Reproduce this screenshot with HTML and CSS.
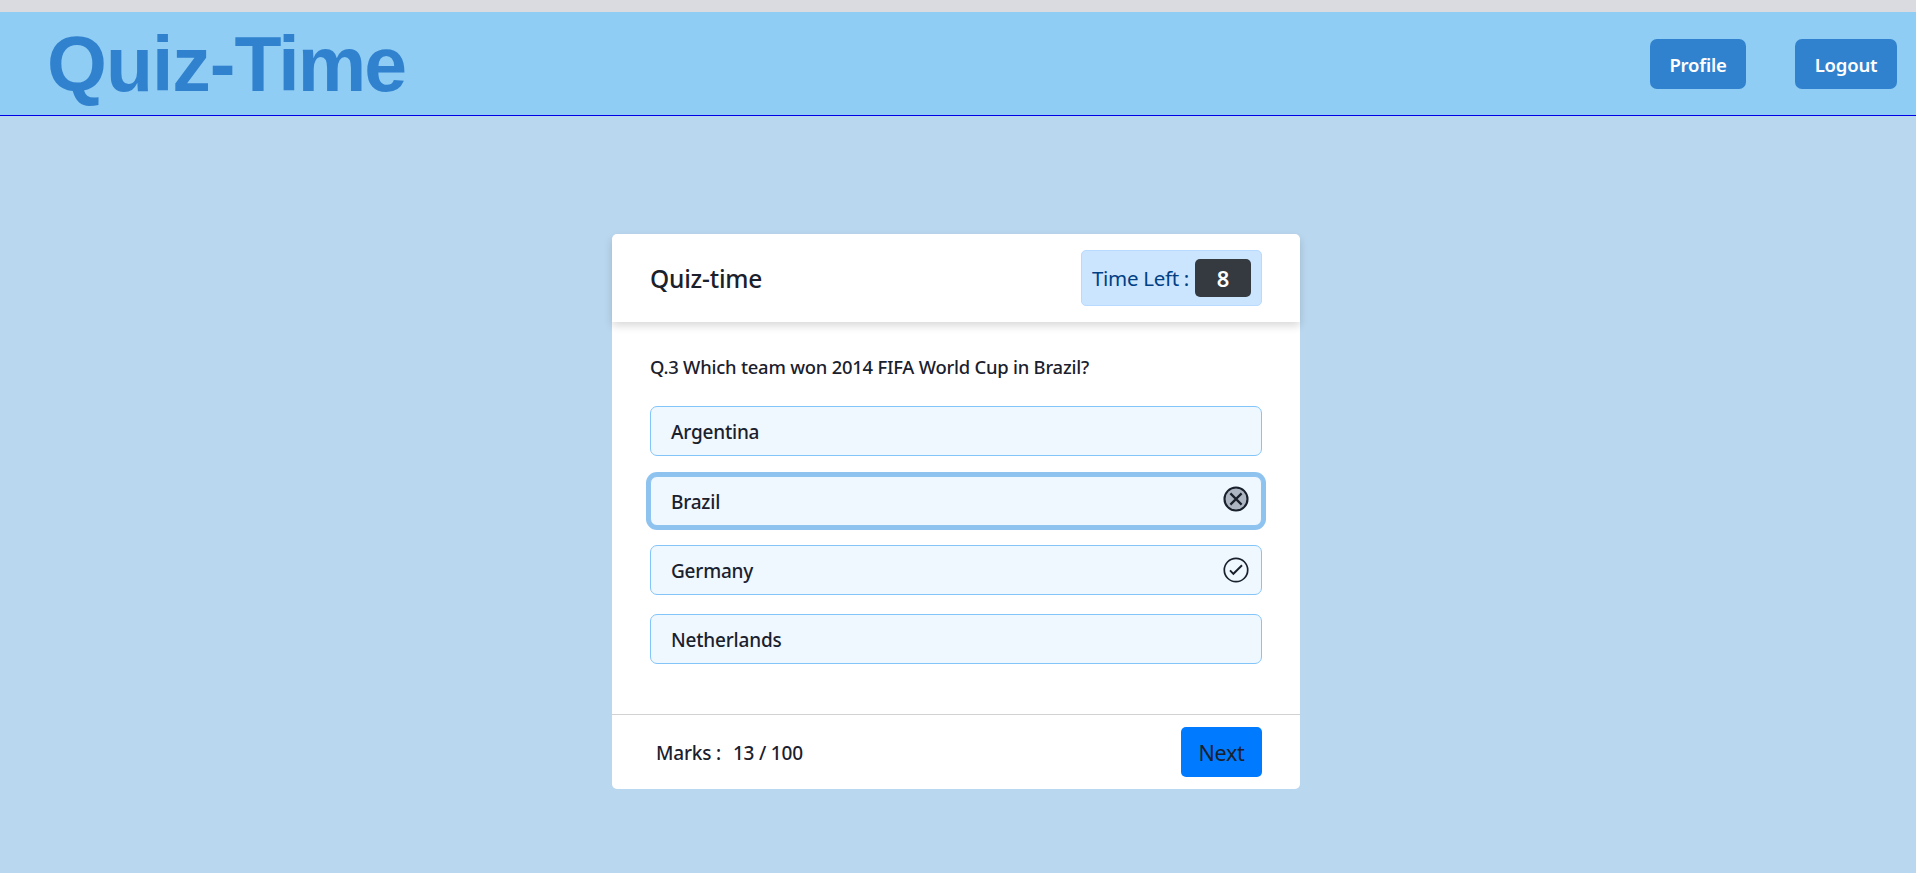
FILE: index.html
```html
<!DOCTYPE html>
<html lang="en">
<head>
<meta charset="utf-8">
<title>Quiz-Time</title>
<link rel="stylesheet" href="styles.css">
</head>
<body>
<header class="navbar">
  <h1 class="brand">Quiz-<span class="brand-tail">Time</span></h1>
  <nav class="nav-actions">
    <button class="nav-btn profile"><span>Profile</span></button>
    <button class="nav-btn logout"><span>Logout</span></button>
  </nav>
</header>
<main class="page">
  <section class="card">
    <div class="card-head">
      <h2 class="card-title"><span>Quiz-time</span></h2>
      <div class="timer"><span class="timer-label">Time Left :</span><span class="timer-value">8</span></div>
    </div>
    <div class="card-body">
      <p class="question"><span>Q.3 Which team won 2014 FIFA World Cup in Brazil?</span></p>
      <div class="options">
        <button class="option"><span>Argentina</span></button>
        <button class="option selected"><span>Brazil</span>
          <svg class="icon icon-wrong" viewBox="0 0 26 26"><circle cx="13" cy="13" r="11.5" fill="#acb5c1" stroke="#1a202c" stroke-width="2.1"/><path d="M7.4 7.4 18.6 18.6M18.6 7.4 7.4 18.6" fill="none" stroke="#1a202c" stroke-width="2.2"/></svg>
        </button>
        <button class="option"><span>Germany</span>
          <svg class="icon icon-right" viewBox="0 0 26 26"><circle cx="13" cy="13" r="11.7" fill="none" stroke="#1a202c" stroke-width="1.7"/><path d="M7 13.3 10.4 16.8 19 8.3" fill="none" stroke="#1a202c" stroke-width="1.9"/></svg>
        </button>
        <button class="option"><span>Netherlands</span></button>
      </div>
    </div>
    <footer class="card-foot">
      <div class="marks"><span>Marks :</span><span>13 / 100</span></div>
      <button class="next"><span>Next</span></button>
    </footer>
  </section>
</main>
</body>
</html>
```
FILE: styles.css
```css
* { box-sizing: border-box; }
body {
  margin: 0;
  height: 873px;
  overflow: hidden;
  background: #b9d7ef;
  color: #1a202c;
  font-family: "Noto Sans", "Open Sans", sans-serif;
  font-size: 19px;
  font-weight: 500;
  letter-spacing: -.2px;
}
h1, h2, p { margin: 0; }
button { font: inherit; letter-spacing: inherit; color: inherit; border: 0; padding: 0; white-space: nowrap; }
.navbar {
  height: 116px;
  padding: 0 19px 0 47px;
  display: flex;
  justify-content: space-between;
  border-top: 12px solid #d9dbe0;
  border-bottom: 1px solid #0000e6;
  background: #90cdf4;
}
.brand {
  padding-top: 8px;
  font: bold 77px/88px "Liberation Sans", Arial, sans-serif;
  letter-spacing: -1px;
  color: #3182ce;
}
.brand-tail { letter-spacing: -1.9px; }
.nav-actions { display: flex; gap: 49px; padding-top: 27px; }
.nav-btn {
  height: 50px;
  border-radius: 7px;
  background: #3182ce;
  color: #fff;
  font-size: 18.5px;
  font-weight: 600;
}
.profile { width: 96px; }
.logout { width: 102px; }
.page { display: flex; justify-content: center; padding: 118px 4px 0 0; }
.card { width: 688px; height: 555px; border-radius: 5px; background: #fff; display: flex; flex-direction: column; }
.card-head {
  height: 88px;
  padding: 0 38px;
  display: flex;
  align-items: center;
  justify-content: space-between;
  border-radius: 5px 5px 0 0;
  box-shadow: 0 4px 8px rgba(0, 0, 0, .15);
}
.card-title { font-size: 24.5px; font-weight: 500; }
.timer {
  width: 181px;
  height: 56px;
  padding: 0 10px;
  display: flex;
  align-items: center;
  justify-content: space-between;
  border: 1px solid #b8daff;
  border-radius: 5px;
  background: #cce5ff;
  color: #004085;
  font-size: 20.5px;
  font-weight: 400;
  letter-spacing: -.3px;
  white-space: nowrap;
}
.timer-value {
  flex: none;
  width: 56px;
  height: 38px;
  border-radius: 5px;
  background: #343a40;
  color: #fff;
  font-size: 22px;
  font-weight: 600;
  line-height: 39px;
  text-align: center;
}
.card-body { height: 392px; padding: 31px 38px 0; }
.question { height: 53px; line-height: 28px; font-size: 18.4px; letter-spacing: -.22px; white-space: nowrap; }
.options { display: flex; flex-direction: column; gap: 19px; }
.option {
  height: 50px;
  padding: 1px 12px 0 20px;
  display: flex;
  align-items: center;
  justify-content: space-between;
  border: 1px solid #84c5f9;
  border-radius: 7px;
  background: #eff7ff;
}
.selected { margin-top: 1px; border-color: #90c4f0; box-shadow: 0 0 0 4px #8fc3ef; }
.icon { width: 26px; height: 26px; }
.icon-wrong { margin-bottom: 5px; }
.icon-right { margin-bottom: 2px; }
.card-foot {
  height: 75px;
  padding: 0 38px 0 44px;
  display: flex;
  align-items: center;
  justify-content: space-between;
  border-top: 1px solid #d2d2d2;
}
.marks { display: flex; gap: 12px; padding-top: 1px; }
.next { width: 81px; height: 50px; border-radius: 5px; background: #007bff; font-size: 21.5px; font-weight: 400; letter-spacing: -.3px; }
```
